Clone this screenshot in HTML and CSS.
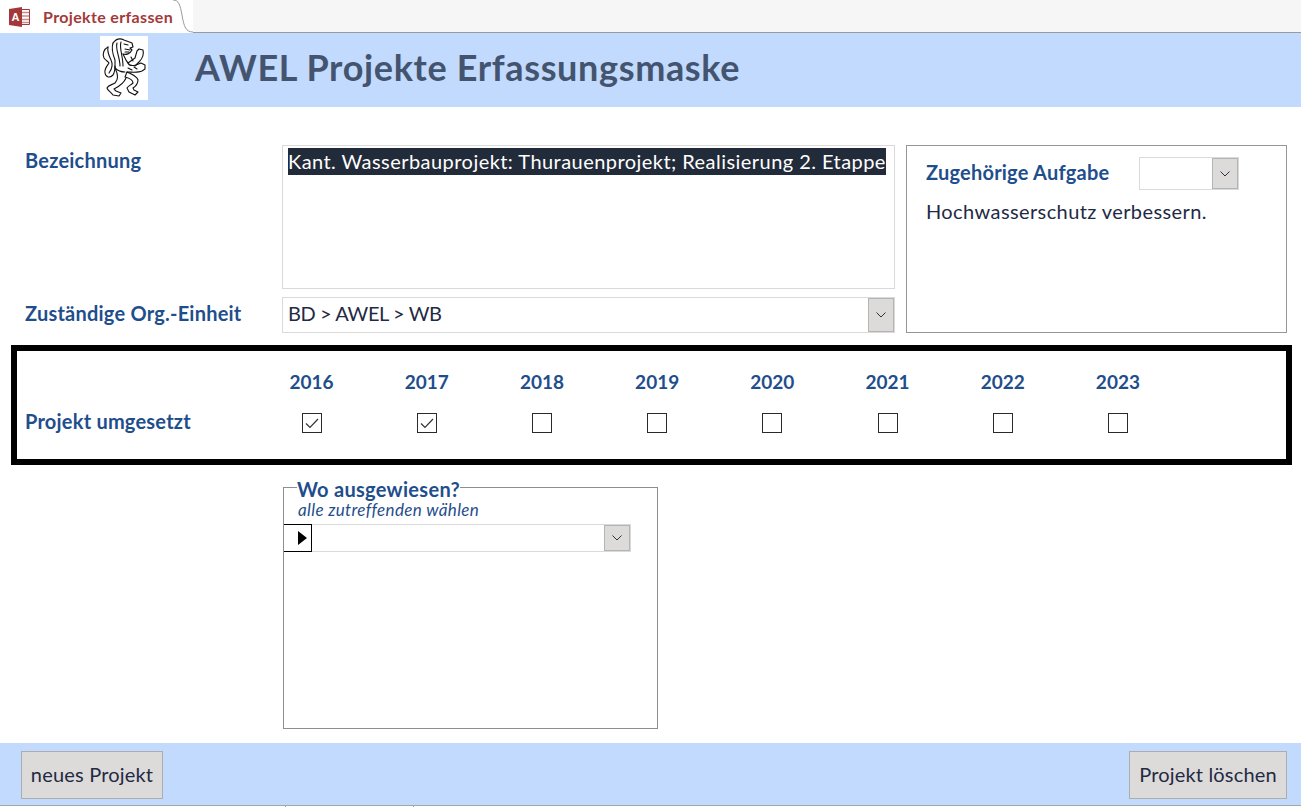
FILE: index.html
```html
<!DOCTYPE html>
<html lang="de">
<head>
<meta charset="utf-8">
<title>Projekte erfassen</title>
<link rel="stylesheet" href="styles.css">
</head>
<body>
<div class="app">
  <div class="tabbar">
    <div class="tab">
      <svg class="access-icon" width="22" height="22" viewBox="0 0 22 22">
        <path d="M12 3.500h8.500v15H12z" fill="#fff" stroke="#a4373a"/>
        <path d="M13 6.500h7M13 10h7M13 13.500h7M13 16.500h7" stroke="#c98a8a" stroke-width="1.500"/>
        <path d="M0 3 L13 1 V21 L0 19Z" fill="#a4373a"/>
        <text x="2.500" y="15" class="access-letter">A</text>
      </svg>
      <span class="tab-label">Projekte erfassen</span>
      <svg class="tab-curve" width="20" height="33" viewBox="0 0 20 33"><path d="M0 0 C6 0 7 5 9 15 C11 27 13 32 20 32 V33 H0Z" fill="#fff"/><path d="M0 0 C6 0 7 5 9 15 C11 27 13 32 20 32" fill="none" stroke="#9a9a9a"/></svg>
    </div>
  </div>

  <header class="header">
    <svg class="logo" width="48" height="64" viewBox="0 0 48 64">
      <rect width="48" height="64" fill="#fff"/>
      <g fill="none" stroke="#111" stroke-width="1.100" stroke-linecap="round" stroke-linejoin="round">
        <path d="M13 7 C16 3 20 2 24 4 L32 7 L33 11 L30 12 L32 14 C30 18 26 19 23 18"/>
        <path d="M24 8 L28 9 M25 13 L30 14 M25 16 L29 16"/>
        <path d="M13 7 C11 13 13 19 15 24 L15 32 C18 35 22 36 25 36"/>
        <path d="M23 18 C25 22 26 25 28 27 L35 22 L37 15 L39 13 L43 14 C44 18 42 23 39 26 L35 30"/>
        <path d="M28 27 C29 30 32 30 36 29 L41 27 L45 29 L45 33 L42 35 C38 37 32 36 27 36"/>
        <path d="M8 11 C4 13 2 18 4 22 C6 25 8 25 9 27 C7 30 4 33 5 37 C6 42 10 42 13 39 C15 36 15 33 15 30"/>
        <path d="M8 11 C7 16 9 20 11 24 C13 28 12 33 9 37"/>
        <path d="M15 32 C18 38 19 43 15 47 C12 49 8 49 7 52 C8 55 11 56 13 59 L19 60 L21 57 L16 55 L14 53 C18 51 24 47 26 42"/>
        <path d="M27 36 L25 41 C29 42 33 44 33 47 C31 49 28 50 27 52 L29 56 L35 59 L38 56 L34 54 L33 52 C36 50 38 48 38 44 C37 40 31 38 27 36"/>
        <path d="M17 7 C15 13 20 21 20 30 M21 6 C19 12 23 20 23 30 M31 21 L33 25 M34 31 L37 33 M28 32 L32 34"/>
      </g>
    </svg>
    <h1 class="title">AWEL Projekte Erfassungsmaske</h1>
  </header>

  <main class="form">
    <section class="top-row">
      <div class="top-left">
        <div class="field-row field-tall">
          <label class="label label-top">Bezeichnung</label>
          <div class="textarea"><span class="selected">Kant. Wasserbauprojekt: Thurauenprojekt; Realisierung 2. Etappe</span></div>
        </div>
        <div class="field-row">
          <label class="label label-org">Zuständige Org.-Einheit</label>
          <div class="combo combo-main">
            <span class="combo-value">BD &gt; AWEL &gt; WB</span>
            <span class="combo-btn"><svg width="10" height="6" viewBox="0 0 10 6"><path d="M0.500 0.500 L5 5 L9.500 0.500" fill="none" stroke="#2b3344"/></svg></span>
          </div>
        </div>
      </div>
      <div class="task-box">
        <div class="task-head">
          <span class="label task-label">Zugehörige Aufgabe</span>
          <div class="combo combo-task">
            <span class="combo-value"></span>
            <span class="combo-btn"><svg width="10" height="6" viewBox="0 0 10 6"><path d="M0.500 0.500 L5 5 L9.500 0.500" fill="none" stroke="#2b3344"/></svg></span>
          </div>
        </div>
        <p class="task-text">Hochwasserschutz verbessern.</p>
      </div>
    </section>

    <section class="years">
      <span class="years-spacer"></span>
      <span class="year">2016</span><span class="year">2017</span><span class="year">2018</span><span class="year">2019</span><span class="year">2020</span><span class="year">2021</span><span class="year">2022</span><span class="year">2023</span>
      <span class="label years-label">Projekt umgesetzt</span>
      <span class="check"><span class="box"><svg width="14" height="11" viewBox="0 0 14 11"><path d="M1 5.500 L5 9.500 L13 1" fill="none" stroke="#333" stroke-width="1.200"/></svg></span></span>
      <span class="check"><span class="box"><svg width="14" height="11" viewBox="0 0 14 11"><path d="M1 5.500 L5 9.500 L13 1" fill="none" stroke="#333" stroke-width="1.200"/></svg></span></span>
      <span class="check"><span class="box"></span></span>
      <span class="check"><span class="box"></span></span>
      <span class="check"><span class="box"></span></span>
      <span class="check"><span class="box"></span></span>
      <span class="check"><span class="box"></span></span>
      <span class="check"><span class="box"></span></span>
    </section>

    <section class="where">
      <div class="where-title">Wo ausgewiesen?</div>
      <div class="where-sub">alle zutreffenden wählen</div>
      <div class="sub-row">
        <span class="selector"><svg width="9" height="14" viewBox="0 0 9 14"><path d="M0 0 L9 7 L0 14Z" fill="#000"/></svg></span>
        <div class="combo combo-where">
          <span class="combo-value"></span>
          <span class="combo-btn"><svg width="10" height="6" viewBox="0 0 10 6"><path d="M0.500 0.500 L5 5 L9.500 0.500" fill="none" stroke="#2b3344"/></svg></span>
        </div>
      </div>
    </section>
  </main>

  <footer class="footer">
    <button class="btn btn-new" type="button">neues Projekt</button>
    <button class="btn btn-delete" type="button">Projekt löschen</button>
  </footer>
  <div class="strip"><span class="tick"></span></div>
</div>
</body>
</html>
```
FILE: styles.css
```css
* { box-sizing: border-box; }
html, body { margin: 0; padding: 0; background: #fff; }
body { font-family: "Lato", "Open Sans", sans-serif; color: #1f2a44; }
.app { width: 1301px; height: 807px; display: flex; flex-direction: column; overflow: hidden; }

.tabbar { height: 33px; flex: none; background: #f6f6f6; border-bottom: 1px solid #9a9a9a; display: flex; }
.tab { width: 193px; height: 33px; background: #fff; display: flex; align-items: center; padding-left: 9px; position: relative; }
.access-icon { flex: none; }
.access-letter { font: bold 11px "Liberation Sans", sans-serif; fill: #fff; }
.tab-label { margin-left: 12px; font-size: 16px; font-weight: 700; letter-spacing: 0.35px; color: #a33a3a; white-space: nowrap; }
.tab-curve { position: absolute; right: 0; top: 0; }

.header { height: 74px; flex: none; background: #c1dafe; display: flex; align-items: flex-start; padding: 3px 0 0 100px; }
.logo { flex: none; }
.title { margin: 9px 0 0 47px; font-size: 36px; line-height: 44px; font-weight: 700; letter-spacing: 0.65px; color: #44546f; white-space: nowrap; }

.form { flex: 1; display: flex; flex-direction: column; background: #fff; padding: 38px 0 0 11px; }
.top-row { display: flex; gap: 11px; padding-left: 14px; height: 188px; }
.top-left { width: 870px; display: flex; flex-direction: column; gap: 8px; }
.field-row { display: flex; align-items: center; height: 36px; }
.field-tall { height: 144px; align-items: flex-start; }
.label { color: #1f4e8c; font-size: 20px; font-weight: 700; letter-spacing: 0.22px; white-space: nowrap; }
.field-row .label { width: 257px; flex: none; }
.label-top { margin-top: 3px; }
.label-org { padding-bottom: 5px; }

.textarea { width: 613px; height: 144px; border: 1px solid #d9d9d9; padding: 2px 5px; font-size: 20px; line-height: 27px; letter-spacing: 0.45px; white-space: nowrap; overflow: hidden; }
.selected { display: inline-block; background: #222b3a; color: #fff; height: 27px; line-height: 27px; }

.combo { display: flex; border: 1px solid #dadada; background: #fff; }
.combo-value { flex: 1; padding-left: 5px; font-size: 20px; letter-spacing: -0.4px; line-height: 30px; }
.combo-btn { flex: none; width: 26px; background: #dcdbda; border: 1px solid #b4b4b4; display: flex; align-items: center; justify-content: center; }
.combo-main { width: 613px; height: 36px; }
.combo-task { width: 100px; height: 33px; }
.combo-where { width: 319px; height: 28px; border-left: 0; }

.task-box { width: 381px; height: 188px; border: 1px solid #969696; padding: 11px 19px; }
.task-head { display: flex; align-items: center; height: 33px; }
.task-label { width: 213px; padding-bottom: 3px; }
.task-text { margin: 8px 0 0; font-size: 20px; line-height: 26px; letter-spacing: 0.4px; }

.years { width: 1281px; height: 120px; margin-top: 12px; border: 6px solid #000; display: grid; grid-template-columns: 229px repeat(8, 115.200px); grid-template-rows: 36px 48px; align-content: start; padding: 12px 0 0 8px; align-items: center; }
.year { color: #1f4e8c; font-size: 19px; font-weight: 700; text-align: center; }
.years-label { padding-bottom: 4px; }
.check { display: flex; justify-content: center; }
.box { width: 20px; height: 20px; border: 1px solid #2a2a2a; background: #fff; display: flex; align-items: center; justify-content: center; }

.where { width: 375px; height: 242px; margin: 22px 0 0 272px; border: 1px solid #8e8e8e; }
.where-title { width: max-content; margin: -11px 0 0 13px; background: #fff; color: #1f4e8c; font-size: 20px; line-height: 24px; font-weight: 700; letter-spacing: 0.3px; }
.where-sub { margin: -1px 0 0 14px; color: #1f4e8c; font-size: 17px; line-height: 20px; font-style: italic; letter-spacing: 0.35px; }
.sub-row { display: flex; margin-top: 4px; }
.selector { flex: none; width: 28px; height: 28px; border: 1px solid #000; border-left: 0; display: flex; align-items: center; justify-content: flex-end; padding-right: 4px; background: #fff; }

.footer { height: 63px; flex: none; background: #c1dafe; border-bottom: 1px solid #a6a6a6; display: flex; justify-content: space-between; align-items: flex-start; padding: 8px 14px 0 21px; }
.btn { height: 48px; padding: 0 0 2px; background: #dcdbda; border: 1px solid #adadad; color: #1f2a44; font-family: inherit; font-size: 20px; letter-spacing: 0.18px; }
.btn-new { width: 142px; }
.btn-delete { width: 158px; }
.strip { height: 1px; flex: none; padding-left: 285px; }
.tick { display: block; width: 129px; height: 1px; border-left: 1px solid #a6a6a6; border-right: 1px solid #a6a6a6; }
```
